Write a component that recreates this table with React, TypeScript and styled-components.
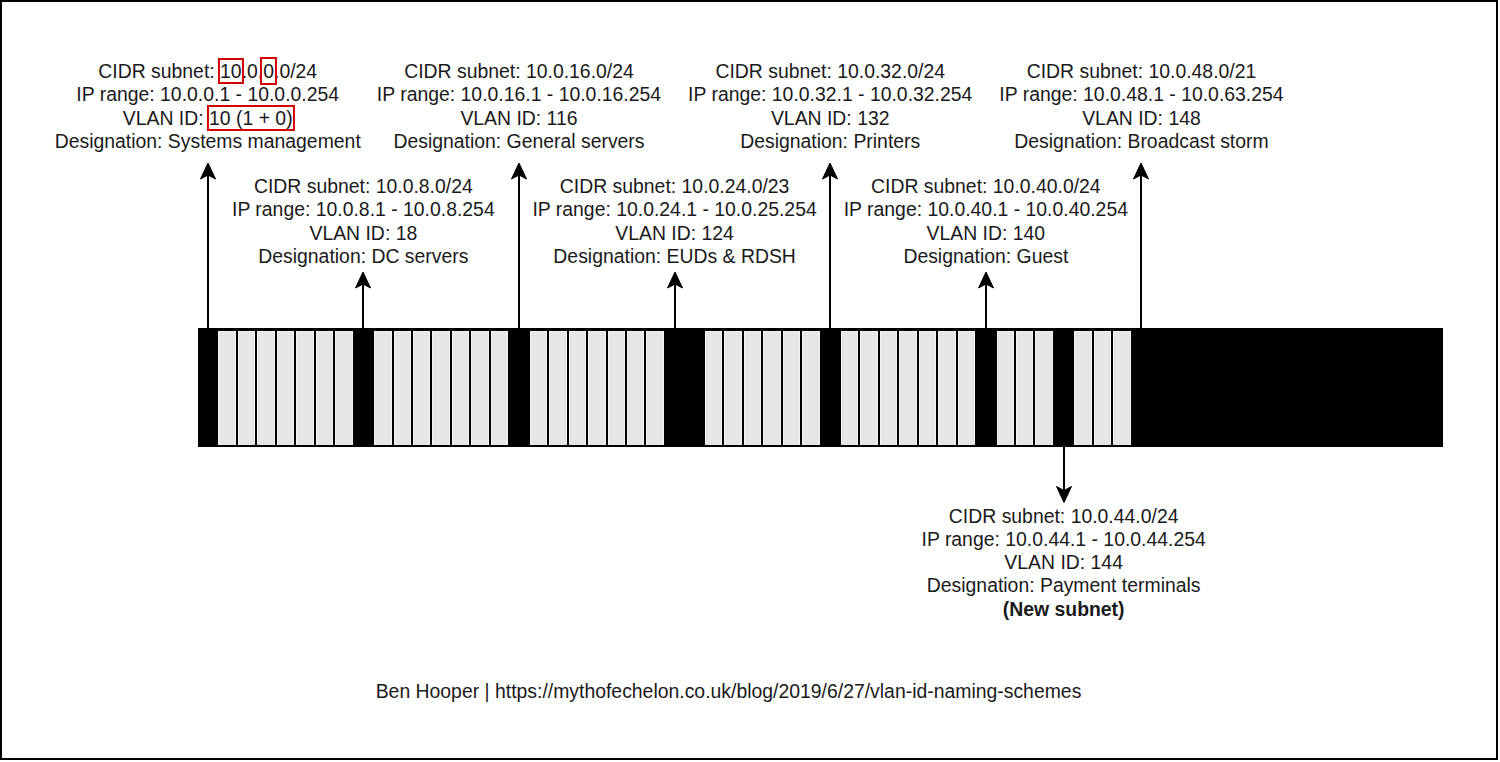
import React from 'react';
import styled, { createGlobalStyle } from 'styled-components';

const GlobalStyle = createGlobalStyle`
  html, body {
    margin: 0;
    padding: 0;
    background: #fff;
  }
  body {
    font-family: "Liberation Sans", Arial, Helvetica, sans-serif;
    color: #1a1a1a;
  }
`;

// geometry of the /18 bar, in frame coordinates (inside the 2px border)
const SLOT_COUNT = 64;
const BAR_LEFT = 196;
const BAR_TOP = 326;
const BAR_WIDTH = 1245;
const BAR_HEIGHT = 119;
const SLOT_WIDTH = BAR_WIDTH / SLOT_COUNT;

const usedSlots = new Set<number>([0, 8, 16, 24, 25, 32, 40, 44]);
for (let i = 48; i < SLOT_COUNT; i++) usedSlots.add(i);

const slotCenter = (slot: number) => BAR_LEFT + (slot + 0.5) * SLOT_WIDTH;

const Frame = styled.div`
  position: relative;
  width: 1498px;
  height: 760px;
  box-sizing: border-box;
  border: 2px solid #000;
  background: #fff;
  padding: ${BAR_TOP}px 0 0 ${BAR_LEFT}px;
`;

const Bar = styled.div`
  display: flex;
  width: ${BAR_WIDTH}px;
  height: ${BAR_HEIGHT}px;
  box-sizing: border-box;
  padding: 2.5px 0 2px;
  background: #000;
`;

const Slot = styled.div<{ $used: boolean }>`
  flex: 1 1 0;
  min-width: 0;
  box-sizing: border-box;
  background: ${(p) => (p.$used ? '#000' : '#e6e6e6')};
  border-left: 1px solid #000;
  border-right: 1px solid #000;
  box-shadow: ${(p) => (p.$used ? 'none' : 'inset 1px 1px 0 #f3f3f3, inset -1px 0 0 #f3f3f3')};
`;

const Label = styled.div`
  position: absolute;
  transform: translateX(-50%);
  white-space: nowrap;
  text-align: center;
  font-size: 19.4px;
  line-height: 23.3px;
`;

const Line = styled.div<{ $bold?: boolean }>`
  font-weight: ${(p) => (p.$bold ? 700 : 400)};
`;

const Mark = styled.span<{ $wide?: boolean }>`
  outline: 2px solid #d40000;
  outline-offset: ${(p) => (p.$wide ? '1px' : '-0.5px')};
`;

const ArrowSvg = styled.svg`
  position: absolute;
  overflow: visible;
`;

const Caption = styled.div`
  position: absolute;
  transform: translateX(-50%);
  white-space: nowrap;
  font-size: 19.4px;
  line-height: 23.3px;
`;

type Subnet = {
  slot: number;
  textTop: number;
  tip: number;
  down?: boolean;
  lines: React.ReactNode[];
  note?: string;
};

const subnets: Subnet[] = [
  {
    slot: 0,
    textTop: 58,
    tip: 161,
    lines: [
      <>CIDR subnet: <Mark>10</Mark>.0.<Mark $wide>0</Mark>.0/24</>,
      'IP range: 10.0.0.1 - 10.0.0.254',
      <>VLAN ID: <Mark>10 (1 + 0)</Mark></>,
      'Designation: Systems management',
    ],
  },
  {
    slot: 8,
    textTop: 173,
    tip: 270,
    lines: ['CIDR subnet: 10.0.8.0/24', 'IP range: 10.0.8.1 - 10.0.8.254', 'VLAN ID: 18', 'Designation: DC servers'],
  },
  {
    slot: 16,
    textTop: 58,
    tip: 161,
    lines: ['CIDR subnet: 10.0.16.0/24', 'IP range: 10.0.16.1 - 10.0.16.254', 'VLAN ID: 116', 'Designation: General servers'],
  },
  {
    slot: 24,
    textTop: 173,
    tip: 270,
    lines: ['CIDR subnet: 10.0.24.0/23', 'IP range: 10.0.24.1 - 10.0.25.254', 'VLAN ID: 124', 'Designation: EUDs & RDSH'],
  },
  {
    slot: 32,
    textTop: 58,
    tip: 161,
    lines: ['CIDR subnet: 10.0.32.0/24', 'IP range: 10.0.32.1 - 10.0.32.254', 'VLAN ID: 132', 'Designation: Printers'],
  },
  {
    slot: 40,
    textTop: 173,
    tip: 270,
    lines: ['CIDR subnet: 10.0.40.0/24', 'IP range: 10.0.40.1 - 10.0.40.254', 'VLAN ID: 140', 'Designation: Guest'],
  },
  {
    slot: 44,
    textTop: 502.5,
    tip: 500.5,
    down: true,
    lines: ['CIDR subnet: 10.0.44.0/24', 'IP range: 10.0.44.1 - 10.0.44.254', 'VLAN ID: 144', 'Designation: Payment terminals'],
    note: '(New subnet)',
  },
  {
    slot: 48,
    textTop: 58,
    tip: 161,
    lines: ['CIDR subnet: 10.0.48.0/21', 'IP range: 10.0.48.1 - 10.0.63.254', 'VLAN ID: 148', 'Designation: Broadcast storm'],
  },
];

const Arrow: React.FC<{ x: number; tip: number; down?: boolean }> = ({ x, tip, down }) => {
  const tail = down ? BAR_TOP + BAR_HEIGHT : BAR_TOP;
  const top = Math.min(tip, tail);
  const len = Math.abs(tail - tip);
  const head = down
    ? `M9 ${len} L1.5 ${len - 16} L9 ${len - 12} L16.5 ${len - 16} Z`
    : 'M9 0 L1.5 16 L9 12 L16.5 16 Z';
  return (
    <ArrowSvg width={18} height={len} style={{ left: x - 9, top }} viewBox={`0 0 18 ${len}`}>
      <line
        x1={9}
        x2={9}
        y1={down ? 0 : 10}
        y2={down ? len - 10 : len}
        stroke="#000"
        strokeWidth={2}
      />
      <path d={head} fill="#000" stroke="#000" strokeWidth={1} strokeLinejoin="miter" />
    </ArrowSvg>
  );
};

const App: React.FC = () => {
  return (
    <>
      <GlobalStyle />
      <Frame>
        <Bar>
          {Array.from({ length: SLOT_COUNT }, (_, i) => (
            <Slot key={i} $used={usedSlots.has(i)} />
          ))}
        </Bar>

        {subnets.map((s) => (
          <React.Fragment key={s.slot}>
            <Arrow x={slotCenter(s.slot)} tip={s.tip} down={s.down} />
            <Label style={{ left: slotCenter(s.slot), top: s.textTop }}>
              {s.lines.map((line, i) => (
                <Line key={i}>{line}</Line>
              ))}
              {s.note && <Line $bold>{s.note}</Line>}
            </Label>
          </React.Fragment>
        ))}

        <Caption style={{ left: 726.5, top: 677.5 }}>
          Ben Hooper | https://mythofechelon.co.uk/blog/2019/6/27/vlan-id-naming-schemes
        </Caption>
      </Frame>
    </>
  );
};

export default App;
